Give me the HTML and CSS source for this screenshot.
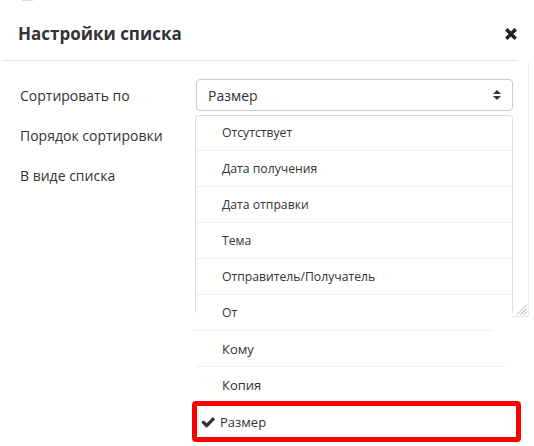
FILE: index.html
```html
<!DOCTYPE html>
<html lang="ru">
<head>
<meta charset="UTF-8">
<meta name="viewport" content="width=device-width, initial-scale=1.0">
<title>Настройки списка</title>
<link rel="stylesheet" href="styles.css">
</head>
<body>
    <div class="modal">
        <div class="modal-top"></div>
        <div class="modal-header">
            <h4 class="modal-title">Настройки списка</h4>
            <button class="close" type="button" aria-label="Закрыть">
                <svg width="12" height="12" viewBox="0 0 12 12">
                    <path d="M1.3 1.3 L10.7 10.7 M10.7 1.3 L1.3 10.7" stroke="#222" stroke-width="3.4" fill="none"/>
                </svg>
            </button>
        </div>
        <div class="modal-body">
            <div class="form-row">
                <label class="form-label">Сортировать по</label>
                <div class="select-wrap">
                    <div class="select">
                        <span>Размер</span>
                        <svg class="caret" width="8" height="12" viewBox="0 0 8 12">
                            <path d="M0 5 L4 1 L8 5 Z M0 7 L4 11 L8 7 Z" fill="#333"/>
                        </svg>
                    </div>
                    <div class="menu">
                        <div class="menu-frame"></div>
                        <ul class="menu-list">
                            <li class="menu-item">Отсутствует</li>
                            <li class="divider"></li>
                            <li class="menu-item">Дата получения</li>
                            <li class="divider"></li>
                            <li class="menu-item">Дата отправки</li>
                            <li class="divider"></li>
                            <li class="menu-item">Тема</li>
                            <li class="divider"></li>
                            <li class="menu-item">Отправитель/Получатель</li>
                            <li class="divider"></li>
                            <li class="menu-item">От</li>
                            <li class="divider divider-short"></li>
                            <li class="menu-item menu-item-lg">Кому</li>
                            <li class="divider divider-mid"></li>
                            <li class="menu-item menu-item-lg menu-item-last">Копия</li>
                            <li class="menu-item menu-item-lg selected">
                                <svg class="check" width="14" height="11" viewBox="64 100 1610 1160">
                                    <path d="M1671 310q0 40-28 68l-724 724-136 136q-28 28-68 28t-68-28l-136-136-362-362q-28-28-28-68t28-68l136-136q28-28 68-28t68 28l294 295 656-657q28-28 68-28t68 28l136 136q28 28 28 68z" fill="#333"/>
                                </svg>
                                Размер
                            </li>
                        </ul>
                    </div>
                </div>
            </div>
            <div class="form-row">
                <label class="form-label">Порядок сортировки</label>
            </div>
            <div class="form-row">
                <label class="form-label">В виде списка</label>
            </div>
        </div>
        <div class="backdrop-edge">
            <svg class="grip" width="11" height="11" viewBox="0 0 11 11">
                <path d="M10.5 1 L1 10.5 M10.5 4.5 L4.5 10.5 M10.5 8 L8 10.5" stroke="#aaa" stroke-width="1" fill="none"/>
            </svg>
        </div>
    </div>
</body>
</html>
```

FILE: styles.css
```css
body {
    font-family: "Open Sans", "Liberation Sans", sans-serif;
    background-color: #fff;
    color: #333;
    margin: 0;
    padding: 0;
}
.modal {
    position: relative;
    width: 534px;
    height: 446px;
    overflow: hidden;
}
.modal-top {
    width: 11px;
    height: 1px;
    margin-left: 22px;
    background-color: #ddd;
}
.modal-header {
    display: flex;
    align-items: center;
    justify-content: space-between;
    height: 60px;
    width: 516px;
    padding-left: 18px;
    padding-right: 1px;
    box-sizing: border-box;
    border-bottom: 1px solid #e5e5e5;
    margin-left: 2px;
}
.modal-title {
    margin: 0 0 -5px -2px;
    font-size: 17px;
    font-weight: 700;
    color: #333;
}
.close {
    background: none;
    border: 0;
    padding: 0;
    margin: 0 0 -7px 0;
    display: flex;
}
.modal-body {
    display: grid;
    row-gap: 8px;
    padding: 18px 0 0 20px;
}
.form-row {
    display: grid;
    grid-template-columns: 176px 317px;
    height: 32px;
    align-items: center;
}
.form-label {
    font-size: 14px;
}
.select-wrap {
    position: relative;
    height: 32px;
}
.select {
    display: flex;
    align-items: center;
    justify-content: space-between;
    height: 32px;
    box-sizing: border-box;
    border: 1px solid #ccc;
    border-radius: 4px;
    padding: 0 11px 0 11px;
    font-size: 14px;
}
.menu {
    position: absolute;
    top: 36px;
    left: -1px;
    width: 318px;
    z-index: 2;
}
.menu-frame {
    position: absolute;
    top: 0;
    left: 0;
    right: 0;
    height: 197px;
    border: 1px solid #ddd;
    border-bottom: 0;
    border-radius: 4px 4px 0 0;
    pointer-events: none;
}
.menu-list {
    list-style: none;
    margin: 0;
    padding: 0;
}
.menu-item {
    display: flex;
    align-items: center;
    height: 35px;
    padding-left: 27px;
    font-size: 12.2px;
}
.menu-item-lg {
    font-size: 13px;
}
.divider {
    height: 1px;
    background-color: #eee;
    margin: 0 1px;
}
.divider-short {
    margin: 0 20px 0 -2px;
}
.divider-mid {
    margin: 0 8px 0 2px;
}
.menu-item-last {
    height: 34px;
    padding-top: 2px;
    box-sizing: border-box;
}
.selected {
    height: 31px;
    margin: 0 -8px 0 -3px;
    padding-left: 4px;
    border: 5px solid #f00;
    border-radius: 4px;
    gap: 5px;
}
.check {
    margin-top: 1px;
}
.backdrop-edge {
    position: absolute;
    top: 62px;
    left: 512px;
    width: 16px;
    height: 254px;
    border-right: 1px solid #eee;
    border-bottom: 1px solid #e5e5e5;
}
.grip {
    position: absolute;
    right: 1px;
    bottom: 1px;
}
```
